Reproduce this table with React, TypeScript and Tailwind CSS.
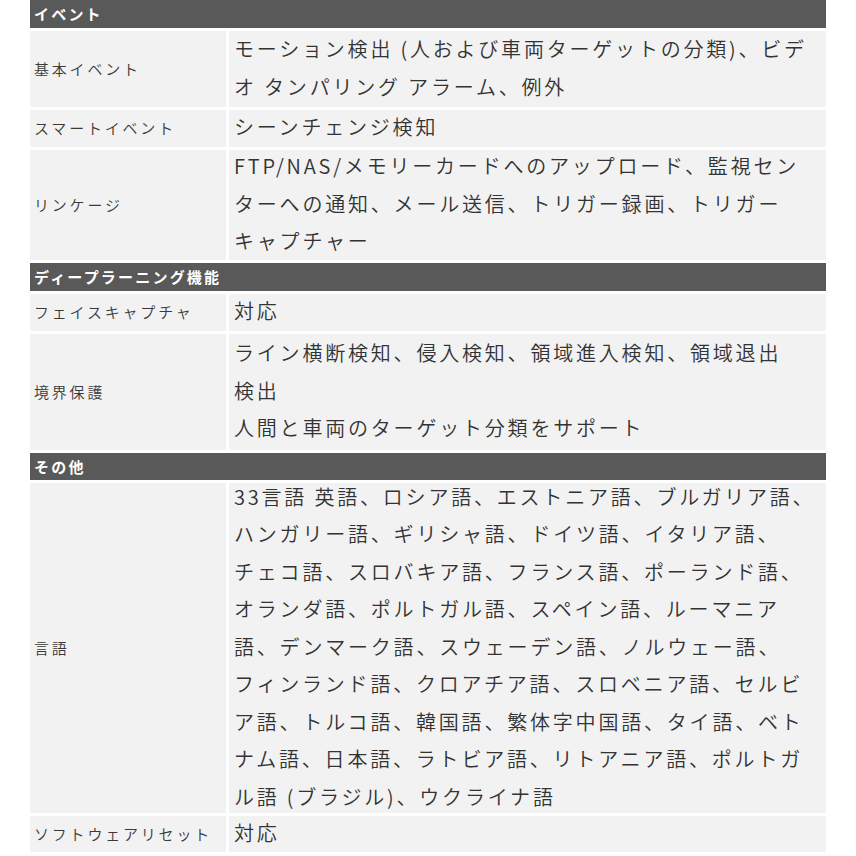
import React from "react";

type Row = { label: string; lines: string[]; h: string };
type Section = { title: string; h: string; rows: Row[] };

const sections: Section[] = [
  {
    title: "イベント",
    h: "h-[28px] leading-[28px]",
    rows: [
      {
        label: "基本イベント",
        h: "h-[76px]",
        lines: ["モーション検出 (人および車両ターゲットの分類)、ビデ", "オ タンパリング アラーム、例外"],
      },
      { label: "スマートイベント", h: "h-[37px]", lines: ["シーンチェンジ検知"] },
      {
        label: "リンケージ",
        h: "h-[110px]",
        lines: [
          "FTP/NAS/メモリーカードへのアップロード、監視セン",
          "ターへの通知、メール送信、トリガー録画、トリガー",
          "キャプチャー",
        ],
      },
    ],
  },
  {
    title: "ディープラーニング機能",
    h: "h-[28px] leading-[28px]",
    rows: [
      { label: "フェイスキャプチャ", h: "h-[37px]", lines: ["対応"] },
      {
        label: "境界保護",
        h: "h-[116px]",
        lines: [
          "ライン横断検知、侵入検知、領域進入検知、領域退出",
          "検出",
          "人間と車両のターゲット分類をサポート",
        ],
      },
    ],
  },
  {
    title: "その他",
    h: "h-[27px] leading-[27px]",
    rows: [
      {
        label: "言語",
        h: "h-[330px]",
        lines: [
          "33言語 英語、ロシア語、エストニア語、ブルガリア語、",
          "ハンガリー語、ギリシャ語、ドイツ語、イタリア語、",
          "チェコ語、スロバキア語、フランス語、ポーランド語、",
          "オランダ語、ポルトガル語、スペイン語、ルーマニア",
          "語、デンマーク語、スウェーデン語、ノルウェー語、",
          "フィンランド語、クロアチア語、スロベニア語、セルビ",
          "ア語、トルコ語、韓国語、繁体字中国語、タイ語、ベト",
          "ナム語、日本語、ラトビア語、リトアニア語、ポルトガ",
          "ル語 (ブラジル)、ウクライナ語",
        ],
      },
      { label: "ソフトウェアリセット", h: "h-[36px]", lines: ["対応"] },
    ],
  },
];

export default function App() {
  return (
    <div
      className="w-[856px] h-[856px] bg-white overflow-hidden"
      style={{ fontFamily: '"Noto Sans CJK JP", "Noto Sans", sans-serif' }}
    >
      <div className="ml-[30px] w-[796px] grid grid-cols-[196px_597px] gap-[3px] text-[#333333]">
        {sections.map((s) => (
          <React.Fragment key={s.title}>
            <div
              className={`col-span-2 bg-[#595959] text-white font-bold text-[15px] pl-[4px] tracking-[2.2px] whitespace-nowrap ${s.h}`}
            >
              {s.title}
            </div>
            {s.rows.map((r) => (
              <React.Fragment key={r.label}>
                <div className="bg-[#f2f2f2] flex items-center pl-[4px] text-[15px] font-[350] tracking-[2.8px] whitespace-nowrap text-[#3a3a3a]">
                  {r.label}
                </div>
                <div
                  className={`bg-[#f2f2f2] pl-[5px] pb-[3px] flex flex-col justify-center text-[20px] font-[350] leading-[37.5px] tracking-[2.8px] ${r.h}`}
                >
                  {r.lines.map((l, i) => (
                    <div key={i} className="whitespace-nowrap">
                      {l}
                    </div>
                  ))}
                </div>
              </React.Fragment>
            ))}
          </React.Fragment>
        ))}
      </div>
    </div>
  );
}
